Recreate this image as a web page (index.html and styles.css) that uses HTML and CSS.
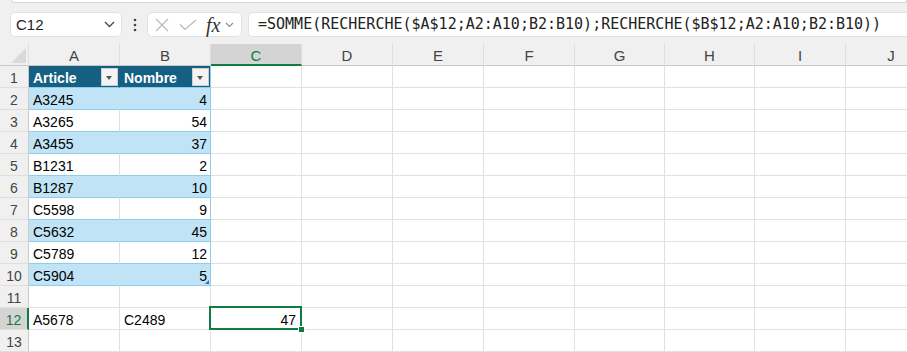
FILE: index.html
```html
<!DOCTYPE html>
<html lang="fr">
<head>
    <meta charset="UTF-8">
    <title>Classeur</title>
    <link rel="stylesheet" href="styles.css">
</head>
<body>
    <div class="ribbon-edge"></div>

    <!-- barre de formule -->
    <div class="formula-bar">
        <div class="name-box">
            <span>C12</span>
            <svg width="11" height="7" viewBox="0 0 11 7"><path d="M1 1 L5.5 5.5 L10 1" fill="none" stroke="#444" stroke-width="1.3"/></svg>
        </div>
        <div class="dots">
            <svg width="4" height="14" viewBox="0 0 4 14"><circle cx="2" cy="2" r="1.3" fill="#444"/><circle cx="2" cy="7" r="1.3" fill="#444"/><circle cx="2" cy="12" r="1.3" fill="#444"/></svg>
        </div>
        <div class="fx-box">
            <svg class="ico-x" width="14" height="14" viewBox="0 0 14 14"><path d="M1 1 L13 13 M13 1 L1 13" stroke="#b8b8b8" stroke-width="1.2" fill="none"/></svg>
            <svg class="ico-check" width="18" height="12" viewBox="0 0 18 12"><path d="M1 5.5 L6 10.5 L17 1" stroke="#b8b8b8" stroke-width="1.2" fill="none"/></svg>
            <span class="fx">fx</span>
            <svg class="ico-chev" width="9" height="6" viewBox="0 0 9 6"><path d="M1 1 L4.5 4.5 L8 1" fill="none" stroke="#888" stroke-width="1.1"/></svg>
        </div>
        <div class="formula">=SOMME(RECHERCHE($A$12;A2:A10;B2:B10);RECHERCHE($B$12;A2:A10;B2:B10))</div>
    </div>

    <!-- feuille -->
    <table class="sheet">
        <colgroup>
            <col class="c-row"><col class="c91"><col class="c91"><col class="c91"><col class="c91"><col class="c91"><col class="c91"><col class="c90"><col class="c90"><col class="c91"><col class="c91">
        </colgroup>
        <tr class="col-head">
            <th class="corner"><span class="tri"></span></th>
            <th>A</th><th>B</th><th class="sel">C</th><th>D</th><th>E</th><th>F</th><th>G</th><th>H</th><th>I</th><th>J</th>
        </tr>
        <tr>
            <th class="rh">1</th>
            <td class="t-head t-a"><div class="hcell"><span>Article</span><span class="filter"></span></div></td>
            <td class="t-head t-b"><div class="hcell"><span>Nombre</span><span class="filter"></span></div></td>
            <td></td><td></td><td></td><td></td><td></td><td></td><td></td><td></td>
        </tr>
        <tr>
            <th class="rh">2</th>
            <td class="band t-a">A3245</td><td class="band t-b num">4</td>
            <td></td><td></td><td></td><td></td><td></td><td></td><td></td><td></td>
        </tr>
        <tr>
            <th class="rh">3</th>
            <td class="plain t-a">A3265</td><td class="plain t-b num">54</td>
            <td></td><td></td><td></td><td></td><td></td><td></td><td></td><td></td>
        </tr>
        <tr>
            <th class="rh">4</th>
            <td class="band t-a">A3455</td><td class="band t-b num">37</td>
            <td></td><td></td><td></td><td></td><td></td><td></td><td></td><td></td>
        </tr>
        <tr>
            <th class="rh">5</th>
            <td class="plain t-a">B1231</td><td class="plain t-b num">2</td>
            <td></td><td></td><td></td><td></td><td></td><td></td><td></td><td></td>
        </tr>
        <tr>
            <th class="rh">6</th>
            <td class="band t-a">B1287</td><td class="band t-b num">10</td>
            <td></td><td></td><td></td><td></td><td></td><td></td><td></td><td></td>
        </tr>
        <tr>
            <th class="rh">7</th>
            <td class="plain t-a">C5598</td><td class="plain t-b num">9</td>
            <td></td><td></td><td></td><td></td><td></td><td></td><td></td><td></td>
        </tr>
        <tr>
            <th class="rh">8</th>
            <td class="band t-a">C5632</td><td class="band t-b num">45</td>
            <td></td><td></td><td></td><td></td><td></td><td></td><td></td><td></td>
        </tr>
        <tr>
            <th class="rh">9</th>
            <td class="plain t-a">C5789</td><td class="plain t-b num">12</td>
            <td></td><td></td><td></td><td></td><td></td><td></td><td></td><td></td>
        </tr>
        <tr>
            <th class="rh">10</th>
            <td class="band t-a">C5904</td><td class="band t-b num last">5<span class="resize"></span></td>
            <td></td><td></td><td></td><td></td><td></td><td></td><td></td><td></td>
        </tr>
        <tr>
            <th class="rh">11</th>
            <td></td><td></td><td></td><td></td><td></td><td></td><td></td><td></td><td></td><td></td>
        </tr>
        <tr>
            <th class="rh sel">12</th>
            <td>A5678</td><td>C2489</td><td class="num active">47</td>
            <td></td><td></td><td></td><td></td><td></td><td></td><td></td>
        </tr>
        <tr>
            <th class="rh">13</th>
            <td></td><td></td><td></td><td></td><td></td><td></td><td></td><td></td><td></td><td></td>
        </tr>
    </table>
</body>
</html>
```

FILE: styles.css
```css
body {
    margin: 0;
    width: 907px;
    height: 352px;
    overflow: hidden;
    background-color: #f0f0f0;
    font-family: "Liberation Sans", Arial, sans-serif;
}
.ribbon-edge {
    height: 2px;
    margin-left: 11px;
    background-color: white;
    border: 1px solid #d6d6d6;
    border-top: none;
    border-radius: 0 0 0 6px;
}
.formula-bar {
    display: flex;
    align-items: center;
    height: 41px;
    padding-top: 2px;
    box-sizing: border-box;
}
.name-box {
    display: flex;
    align-items: center;
    justify-content: space-between;
    width: 112px;
    height: 25px;
    margin-left: 10px;
    padding: 0 6px 0 5px;
    box-sizing: border-box;
    background-color: white;
    border: 1px solid #e2e2e2;
    border-radius: 5px;
    font-size: 15px;
    color: #222;
}
.dots {
    display: flex;
    width: 25px;
    justify-content: center;
}
.fx-box {
    display: flex;
    align-items: center;
    width: 95px;
    height: 25px;
    box-sizing: border-box;
    background-color: white;
    border: 1px solid #e2e2e2;
    border-radius: 5px;
    padding-left: 7px;
}
.ico-x {
    margin-right: 10px;
}
.ico-check {
    margin-right: 9px;
}
.fx {
    font-family: "Liberation Serif", serif;
    font-style: italic;
    font-size: 20px;
    color: #333;
    margin-right: 5px;
    line-height: 1;
}
.formula {
    flex: 1;
    height: 25px;
    margin-left: 6px;
    padding-left: 9px;
    box-sizing: border-box;
    background-color: white;
    border: 1px solid #e2e2e2;
    border-right: none;
    border-radius: 5px 0 0 5px;
    font-family: "DejaVu Sans Mono", monospace;
    font-size: 15px;
    line-height: 23px;
    color: #222;
    white-space: nowrap;
    overflow: hidden;
}
.sheet {
    border-collapse: separate;
    border-spacing: 0;
    table-layout: fixed;
    width: 937px;
    background-color: white;
    font-size: 14px;
}
.c-row { width: 29px; }
.c91 { width: 91px; }
.c90 { width: 90px; }
.sheet tr {
    height: 22px;
}
.sheet td, .sheet th {
    padding: 2px 4px 0 4px;
    height: 22px;
    box-sizing: border-box;
    border-right: 1px solid #e1e1e1;
    border-bottom: 1px solid #e1e1e1;
    white-space: nowrap;
    overflow: hidden;
    color: #000;
    font-weight: normal;
    text-align: left;
}
.col-head th {
    background-color: #f0f0f0;
    border-bottom: 1px solid #c9c9c9;
    border-right: 1px solid #dedede;
    text-align: center;
    color: #444;
    font-size: 15px;
    padding: 2px 0 0 0;
}
.col-head th.sel {
    background-color: #d4d4d4;
    color: #107c41;
    border-bottom: 2px solid #107c41;
}
.corner {
    position: relative;
}
.tri {
    position: absolute;
    right: 2px;
    bottom: 2px;
    width: 0;
    height: 0;
    border-left: 15px solid transparent;
    border-bottom: 15px solid #dadada;
}
.sheet th.rh {
    background-color: #f0f0f0;
    border-right: 1px solid #c9c9c9;
    border-bottom: 1px solid #dedede;
    text-align: center;
    color: #444;
    padding: 2px 0 0 0;
}
.sheet th.rh.sel {
    background-color: #d4d4d4;
    color: #107c41;
    border-right: 2px solid #107c41;
}
.sheet td.t-head {
    background-color: #156082;
    color: white;
    font-weight: bold;
    border-bottom-color: #8fcdec;
    padding: 0 1px 0 4px;
}
.sheet td.t-head.t-a {
    border-right-color: #156082;
}
.hcell {
    display: flex;
    align-items: center;
    justify-content: space-between;
}
.hcell span:first-child {
    padding-top: 2px;
}
.filter {
    position: relative;
    width: 17px;
    height: 18px;
    box-sizing: border-box;
    background-color: #f3f3f3;
    border: 1px solid #cfcfcf;
}
.filter::after {
    content: "";
    position: absolute;
    left: 4px;
    top: 7px;
    border-left: 3.5px solid transparent;
    border-right: 3.5px solid transparent;
    border-top: 4px solid #555;
}
.sheet td.band {
    background-color: #c0e4f5;
    border-bottom-color: #8fcdec;
}
.sheet td.band.t-a {
    border-right-color: #c0e4f5;
}
.sheet td.plain {
    border-bottom-color: #8fcdec;
}
.sheet td.t-b {
    border-right-color: #8fcdec;
}
.sheet td.num {
    text-align: right;
    padding-right: 3px;
}
.sheet td.last {
    position: relative;
}
.resize {
    position: absolute;
    right: 1px;
    bottom: 1px;
    width: 0;
    height: 0;
    border-left: 4px solid transparent;
    border-bottom: 4px solid #3b64c8;
}
.sheet td.active {
    position: relative;
    overflow: visible;
    padding-right: 5px;
}
.active::after {
    content: "";
    position: absolute;
    top: -2px;
    left: -2px;
    right: -1px;
    bottom: -1px;
    border: 2px solid #107c41;
}
.active::before {
    content: "";
    position: absolute;
    right: -4px;
    bottom: -4px;
    width: 5px;
    height: 5px;
    background-color: #107c41;
    border: 1px solid white;
    z-index: 1;
}
```
